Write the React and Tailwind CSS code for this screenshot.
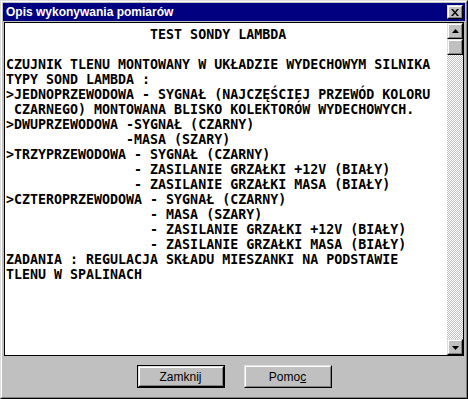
import React from 'react';

// Win95 style "Opis wykonywania pomiarów" dialog
const LINES = [
  '                  TEST SONDY LAMBDA',
  '',
  'CZUJNIK TLENU MONTOWANY W UKŁADZIE WYDECHOWYM SILNIKA',
  'TYPY SOND LAMBDA :',
  '>JEDNOPRZEWODOWA - SYGNAŁ (NAJCZĘŚCIEJ PRZEWÓD KOLORU',
  ' CZARNEGO) MONTOWANA BLISKO KOLEKTORÓW WYDECHOWYCH.',
  '>DWUPRZEWODOWA -SYGNAŁ (CZARNY)',
  '               -MASA (SZARY)',
  '>TRZYPRZEWODOWA - SYGNAŁ (CZARNY)',
  '                - ZASILANIE GRZAŁKI +12V (BIAŁY)',
  '                - ZASILANIE GRZAŁKI MASA (BIAŁY)',
  '>CZTEROPRZEWODOWA - SYGNAŁ (CZARNY)',
  '                  - MASA (SZARY)',
  '                  - ZASILANIE GRZAŁKI +12V (BIAŁY)',
  '                  - ZASILANIE GRZAŁKI MASA (BIAŁY)',
  'ZADANIA : REGULACJA SKŁADU MIESZANKI NA PODSTAWIE',
  'TLENU W SPALINACH',
];

const Raised = ({ className = '', children }) => (
  <div className={`border border-t-[#dfdfdf] border-l-[#dfdfdf] border-r-black border-b-black ${className}`}>
    <div className="w-full h-full border border-t-white border-l-white border-r-[#808080] border-b-[#808080] bg-[#c0c0c0] flex items-center justify-center">
      {children}
    </div>
  </div>
);

const Arrow = ({ down }) => (
  <svg width="7" height="4" viewBox="0 0 7 4" className={down ? 'mt-[1px]' : '-mt-[1px]'}>
    {down ? <path d="M0 0h7L3.5 4z" fill="#000" /> : <path d="M3.5 0L7 4H0z" fill="#000" />}
  </svg>
);

const App = () => {
  return <div className="w-[468px] h-[399px] border border-t-[#dfdfdf] border-l-[#dfdfdf] border-r-black border-b-black">
      <div className="w-full h-full border border-t-white border-l-white border-r-[#808080] border-b-[#808080] bg-[#c0c0c0] p-[1px] flex flex-col">
        <div className="h-[18px] bg-[#000080] flex items-center justify-between pl-[3px] pr-[2px]">
          <span className="text-white font-bold text-[12px]" style={{ fontFamily: '"Liberation Sans", Arial, sans-serif' }}>
            Opis wykonywania pomiarów
          </span>
          <Raised className="w-[16px] h-[14px]">
            <svg width="8" height="7" viewBox="0 0 8 7">
              <path d="M0 0h2l2 2.5L6 0h2L5 3.5 8 7H6L4 4.5 2 7H0l3-3.5z" fill="#000" />
            </svg>
          </Raised>
        </div>
        <div className="mt-[1px] mx-[1px] h-[334px] border border-black bg-white flex">
          <div className="flex-1 pl-[1px] pt-[4px] overflow-hidden">
            {LINES.map((line, i) => <div key={i} className="whitespace-pre h-[15px] leading-[15px] text-[13.3px] font-bold text-black" style={{ fontFamily: '"DejaVu Sans Mono", monospace' }}>
                {line}
              </div>)}
          </div>
          <div className="w-[16px] flex flex-col bg-[repeating-conic-gradient(#c0c0c0_0_25%,#fff_0_50%)] bg-[length:2px_2px]">
            <Raised className="w-[16px] h-[16px]"><Arrow /></Raised>
            <Raised className="w-[16px] h-[16px]" />
            <div className="flex-1" />
            <Raised className="w-[16px] h-[16px]"><Arrow down /></Raised>
          </div>
        </div>
        <div className="flex justify-center gap-[19px] mt-[9px]" style={{ fontFamily: '"Liberation Sans", Arial, sans-serif' }}>
          <div className="border border-black">
            <Raised className="w-[86px] h-[21px]">
              <span className="text-[12px] text-black">Zamknij</span>
            </Raised>
          </div>
          <Raised className="w-[88px] h-[23px]">
            <span className="text-[12px] text-black">Pomo<span className="underline">c</span></span>
          </Raised>
        </div>
      </div>
    </div>;
};

export default App;
